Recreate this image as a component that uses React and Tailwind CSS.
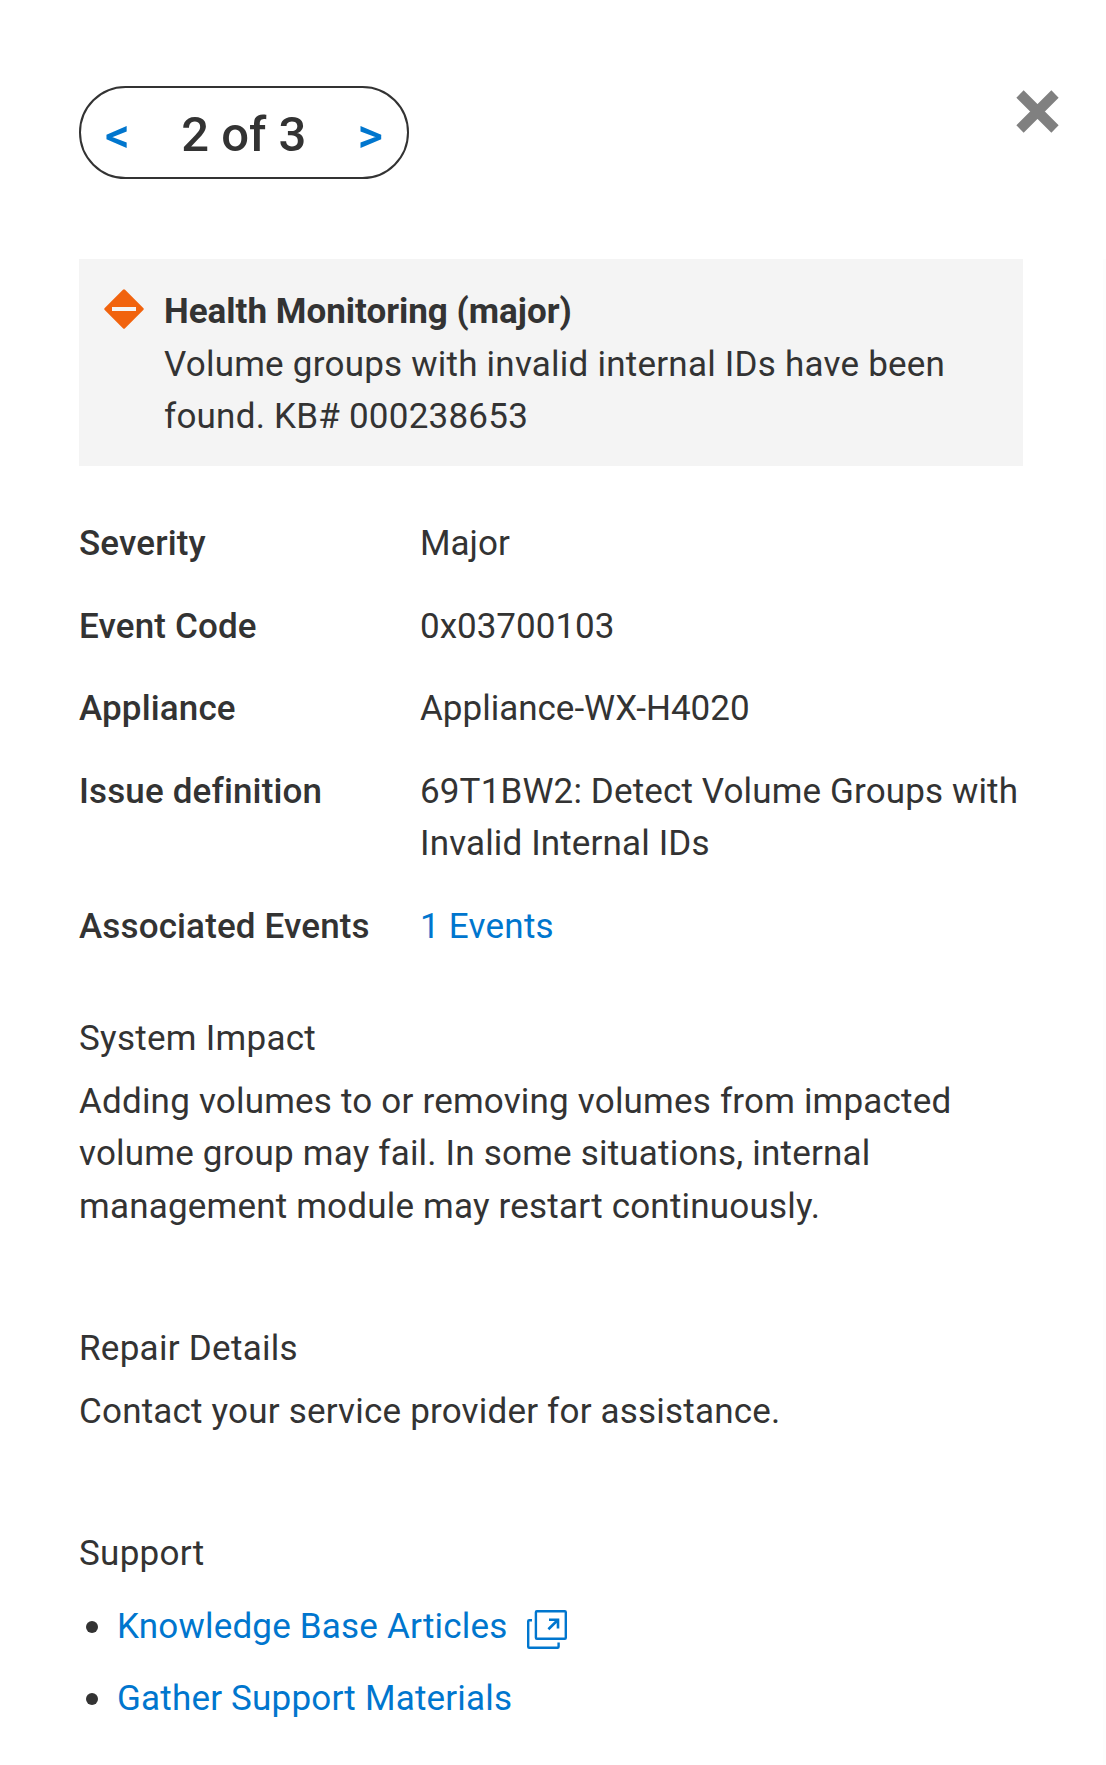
const DETAILS = [
    { label: 'Severity', value: 'Major' },
    { label: 'Event Code', value: '0x03700103' },
    { label: 'Appliance', value: 'Appliance-WX-H4020' },
    { label: 'Issue definition', value: '69T1BW2: Detect Volume Groups with Invalid Internal IDs', wide: true },
    { label: 'Associated Events', value: '1 Events', link: true },
];

function ExternalIcon() {
    return (
        <svg className="w-[40px] h-[40px] ml-[19px] mt-[6px]" viewBox="0 0 40 40" fill="none" stroke="#0076ce" strokeWidth="2.4">
            <rect x="8.9" y="1.2" width="29.9" height="27.6" rx="1" />
            <path d="M5 10.2H2.2a1 1 0 0 0-1 1v25.6a1 1 0 0 0 1 1h28.4a1 1 0 0 0 1-1v-4.3" />
            <path d="M21.4 19.2l9.4-9.2M22 9.7h9v8.8" strokeWidth="2.6" />
        </svg>
    );
}

function Bullet() {
    return <span className="w-[12px] h-[12px] ml-[7px] mr-[19px] rounded-full bg-[#333]" />;
}

export default function App() {
    return (
        <div className="w-full h-[1765px] overflow-hidden bg-white text-[#333] text-[35px] leading-[52.6px] pl-[79px] pt-[86px] flex flex-col" style={{ fontFamily: 'Roboto, sans-serif' }}>
            <header className="flex items-start justify-between pr-[47px]">
                <nav className="w-[330px] h-[93px] flex items-center justify-between px-[24px] pt-[5px] rounded-[47px] border-2 border-[#333]">
                    <button className="text-[#0076ce] text-[49px] font-medium pt-[2px]">&lt;</button>
                    <span className="text-[49px] font-medium">2 of 3</span>
                    <button className="text-[#0076ce] text-[49px] font-medium pt-[2px]">&gt;</button>
                </nav>
                <button aria-label="Close" className="mt-[4px]">
                    <svg className="w-[43px] h-[43px]" viewBox="0 0 43 43" stroke="#808080" strokeWidth="10.3">
                        <path d="M4 4l35 35M39 4L4 39" />
                    </svg>
                </button>
            </header>

            <main className="mt-[80px] flex-1 border-r-[3px] border-[#fdfdfd]">
                <section className="w-[944px] h-[207px] bg-[#f4f4f4] flex pl-[25px] pt-[27px]">
                    <svg className="w-[40px] h-[40px] mt-[3px] mr-[20px] shrink-0" viewBox="0 0 40 40">
                        <path d="M20 1.8l18.2 18.2L20 38.2 1.8 20z" fill="#f1630e" stroke="#f1630e" strokeWidth="3" strokeLinejoin="round" />
                        <path d="M8 20h24" stroke="#f4f4f4" strokeWidth="4" />
                    </svg>
                    <div>
                        <h2 className="font-bold">Health Monitoring (major)</h2>
                        <p className="w-[830px] tracking-[0.23px]">Volume groups with invalid internal IDs have been found. KB# 000238653</p>
                    </div>
                </section>

                <dl className="mt-[52px] grid grid-cols-[341px_620px] gap-y-[30px]">
                    {DETAILS.map(({ label, value, link, wide }) => (
                        <div key={label} className="contents">
                            <dt className="font-medium tracking-[0.14px]">{label}</dt>
                            <dd className={link ? 'text-[#0076ce] tracking-[0.25px]' : wide ? 'tracking-[0.14px]' : ''}>{value}</dd>
                        </div>
                    ))}
                </dl>

                <section className="mt-[59px] tracking-[0.2px]">
                    <h3 className="tracking-[0.28px]">System Impact</h3>
                    <p className="mt-[10.4px] w-[920px]">Adding volumes to or removing volumes from impacted volume group may fail. In some situations, internal management module may restart continuously.</p>
                </section>
                <section className="mt-[89.2px] tracking-[0.2px]">
                    <h3 className="tracking-[0.28px]">Repair Details</h3>
                    <p className="mt-[10.4px]">Contact your service provider for assistance.</p>
                </section>
                <section className="mt-[90px] tracking-[0.2px]">
                    <h3 className="tracking-[0.28px]">Support</h3>
                    <ul className="mt-[20px] space-y-[19.4px] text-[#0076ce]">
                        <li className="flex items-center">
                            <Bullet />
                            Knowledge Base Articles
                            <ExternalIcon />
                        </li>
                        <li className="flex items-center">
                            <Bullet />
                            Gather Support Materials
                        </li>
                    </ul>
                </section>
            </main>
        </div>
    );
}
